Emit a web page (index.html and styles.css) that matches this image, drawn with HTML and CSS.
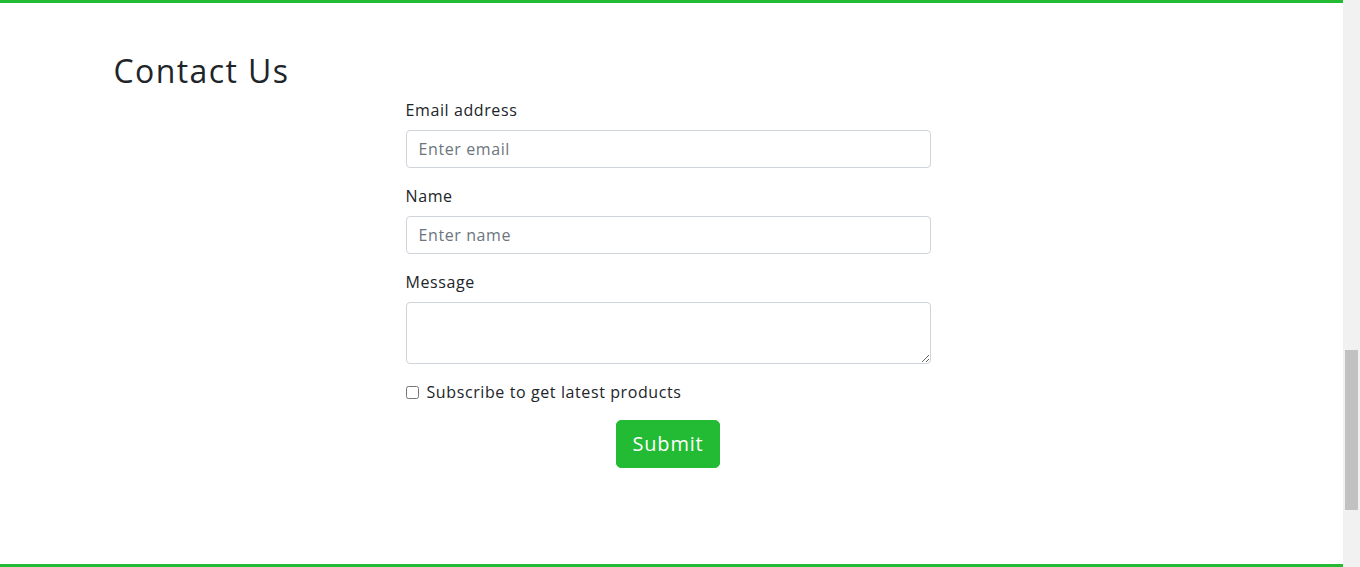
FILE: index.html
```html
<!DOCTYPE html>
<html lang="en">
<head>
<meta charset="utf-8">
<title>Contact Us</title>
<link rel="stylesheet" href="styles.css">
</head>
<body>
<div class="page">
  <main class="section">
    <div class="container">
      <h2 class="title">Contact Us</h2>
      <form class="form">
        <div class="field">
          <label class="label" for="email">Email address</label>
          <input class="control" id="email" type="email" placeholder="Enter email">
        </div>
        <div class="field">
          <label class="label" for="name">Name</label>
          <input class="control" id="name" type="text" placeholder="Enter name">
        </div>
        <div class="field">
          <label class="label" for="msg">Message</label>
          <textarea class="control area" id="msg"></textarea>
        </div>
        <div class="check">
          <input class="box" type="checkbox" id="sub">
          <label class="check-label" for="sub">Subscribe to get latest products</label>
        </div>
        <div class="actions">
          <button class="btn" type="button">Submit</button>
        </div>
      </form>
    </div>
  </main>
  <div class="scrollbar"><div class="thumb"></div></div>
</div>
</body>
</html>
```

FILE: styles.css
```css
* { box-sizing: border-box; }
html, body { margin: 0; padding: 0; }
body {
  font-family: "Open Sans", "Liberation Sans", sans-serif;
  color: #212529;
  background: #fff;
  font-size: 16px;
  line-height: 1.5;
}
.page {
  display: flex;
  height: 567px;
  overflow: hidden;
}
.section {
  flex: 1;
  border-top: 3px solid #22bb33;
  border-bottom: 3px solid #22bb33;
}
.container {
  width: 1140px;
  margin: 0 auto;
  padding: 49px 12px 0;
}
.title {
  margin: 0 0 8px;
  font-size: 32px;
  font-weight: 400;
  line-height: 1.2;
  letter-spacing: 1.4px;
}
.form {
  width: 525px;
  margin-left: 292px;
}
.field { margin-bottom: 16px; }
.label {
  display: block;
  margin-bottom: 8px;
  font-size: 16px;
  line-height: 24px;
  letter-spacing: 0.6px;
}
.control {
  display: block;
  width: 100%;
  height: 38px;
  padding: 6px 12px;
  font-family: inherit;
  font-size: 16px;
  line-height: 24px;
  color: #212529;
  background: #fff;
  border: 1px solid #ced4da;
  border-radius: 4px;
  letter-spacing: 0.6px;
}
.control::placeholder { color: #6c757d; }
.area { height: 62px; resize: vertical; }
.check {
  display: flex;
  align-items: center;
  height: 24px;
  margin-bottom: 16px;
}
.box {
  width: 13px;
  height: 13px;
  margin: 0 8px 0 0;
}
.check-label {
  font-size: 16px;
  letter-spacing: 0.6px;
}
.actions {
  display: flex;
  justify-content: center;
}
.btn {
  height: 48px;
  padding: 8px 16px;
  font-family: inherit;
  font-size: 20px;
  line-height: 30px;
  color: #fff;
  background: #22bb33;
  border: 1px solid #22bb33;
  border-radius: 5px;
  letter-spacing: 0.8px;
}
.scrollbar {
  width: 17px;
  background: #f1f1f1;
  padding: 350px 2px 0;
}
.thumb {
  height: 160px;
  background: #c1c1c1;
}
```
